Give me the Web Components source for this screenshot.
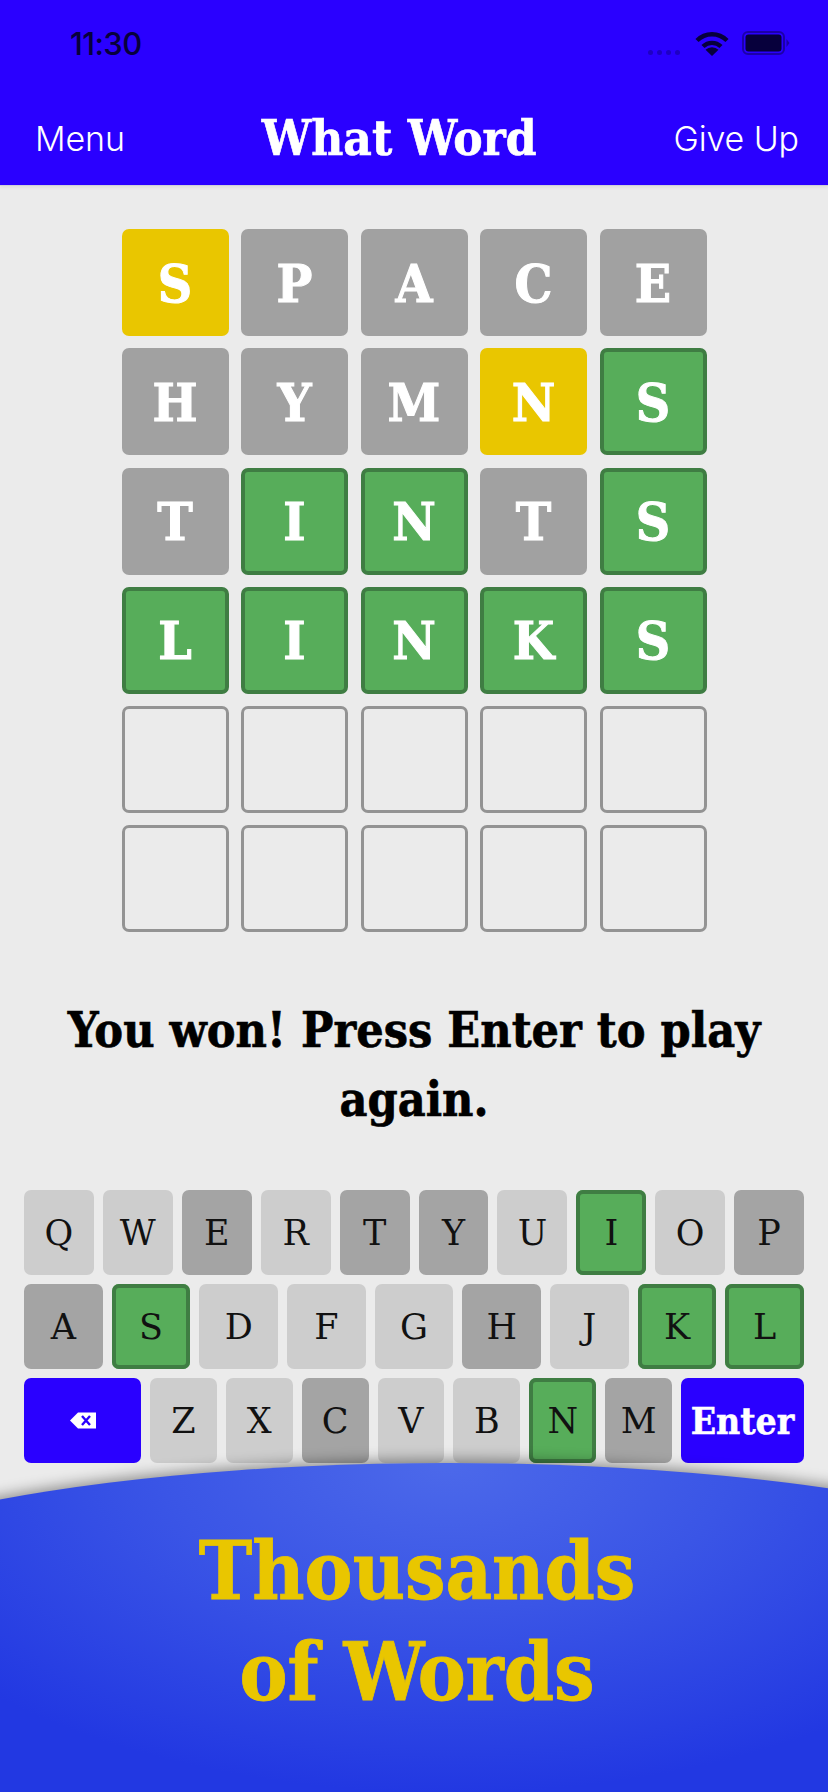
<!DOCTYPE html>
<html>
<head>
<meta charset="utf-8">
<title>What Word</title>
<style>
html, body { margin: 0; padding: 0; background: #ebebeb; }
body { width: 828px; height: 1792px; overflow: hidden; position: relative; }
</style>
</head>
<body>
<what-word-app></what-word-app>
<script>
const SLAB = '"DejaVu Serif Condensed", "DejaVu Serif", serif';
const SLAB_WIDE = '"DejaVu Serif", serif';

class StatusBar extends HTMLElement {
    constructor() {
        super();
        this.attachShadow({ mode: "open" }).innerHTML = `<style>
            :host { display: flex; align-items: center; height: 86px; box-sizing: border-box; padding: 0 38px 0 70px; font: 500 31px "Inter", "Liberation Sans", sans-serif; color: #07003c; }
            .time { flex: 1; letter-spacing: -0.6px; }
            .dots { display: flex; gap: 4px; margin: 18px 15px 0 0; }
            .dots i { width: 5px; height: 5px; border-radius: 50%; background: #1e00c4; }
            svg { display: block; }
            .battery { margin-left: 13px; }
        </style>
        <span class="time">11:30</span>
        <span class="dots"><i></i><i></i><i></i><i></i></span>
        <svg width="34" height="25" viewBox="0 0 34 25">
            <path d="M2 9.5 A21 21 0 0 1 32 9.5" fill="none" stroke="#07003c" stroke-width="4.4"/>
            <path d="M8 15.5 A13 13 0 0 1 26 15.5" fill="none" stroke="#07003c" stroke-width="4.4"/>
            <path d="M17 25 L10.5 18.8 A9.5 9.5 0 0 1 23.5 18.8 Z" fill="#07003c"/>
        </svg>
        <svg class="battery" width="48" height="24" viewBox="0 0 48 24">
            <rect x="1" y="1" width="41" height="22" rx="5" fill="none" stroke="#1c00a8" stroke-width="2"/>
            <rect x="3.5" y="3.5" width="36" height="17" rx="3" fill="#07003c"/>
            <path d="M44.5 8 L47.5 12 L44.5 16 Z" fill="#1c00a8"/>
        </svg>`;
    }
}
customElements.define("status-bar", StatusBar);

class NavBar extends HTMLElement {
    constructor() {
        super();
        this.attachShadow({ mode: "open" }).innerHTML = `<style>
            :host { display: block; background: #2a00ff; height: 185px; box-shadow: 0 1px 0 #cfcfd8, 0 3px 3px rgba(0,0,0,.05); position: relative; }
            .row { display: flex; align-items: center; justify-content: space-between; padding: 0 29px 0 35px; height: 44px; margin-top: 30px; color: #fff; font: 300 34px "Inter", "Liberation Sans", sans-serif; letter-spacing: -0.1px; }
            .title { font: 700 49px ${SLAB}; letter-spacing: 0; -webkit-text-stroke: 0.6px #fff; }
        </style>
        <status-bar></status-bar>
        <div class="row"><span>Menu</span><span class="title">What Word</span><span>Give Up</span></div>`;
    }
}
customElements.define("nav-bar", NavBar);

class WordTile extends HTMLElement {
    constructor() {
        super();
        this.attachShadow({ mode: "open" }).innerHTML = `<style>
            :host { display: flex; align-items: center; justify-content: center; box-sizing: border-box; height: 107px; border-radius: 7px; color: #fff; font: 700 53px ${SLAB}; -webkit-text-stroke: 1px #fff; }
            :host([state="absent"]) { background: #a1a1a1; }
            :host([state="present"]) { background: #e9c600; }
            :host([state="correct"]) { background: #57ad5a; border: 4px solid #3f7d43; }
            :host([state="empty"]) { border: 3.5px solid #939393; }
        </style><slot></slot>`;
    }
}
customElements.define("word-tile", WordTile);

class WordGrid extends HTMLElement {
    constructor() {
        super();
        let root = this.attachShadow({ mode: "open" });
        root.innerHTML = `<style>
            :host { display: grid; grid-template-columns: repeat(5, 107px); column-gap: 12.5px; row-gap: 12.3px; justify-content: center; padding-top: 44px; }
        </style>`;
        let rows = [
            ["SPACE", "paaaa"],
            ["HYMNS", "aaapc"],
            ["TINTS", "accac"],
            ["LINKS", "ccccc"],
            ["     ", "eeeee"],
            ["     ", "eeeee"]
        ];
        let names = { p: "present", a: "absent", c: "correct", e: "empty" };
        for (let [word, marks] of rows) {
            for (let i = 0; i < 5; i++) {
                let tile = document.createElement("word-tile");
                tile.setAttribute("state", names[marks[i]]);
                tile.textContent = word[i].trim();
                root.appendChild(tile);
            }
        }
    }
}
customElements.define("word-grid", WordGrid);

class GameMessage extends HTMLElement {
    constructor() {
        super();
        this.attachShadow({ mode: "open" }).innerHTML = `<style>
            :host { display: block; box-sizing: border-box; height: 258px; padding: 64px 40px 0; text-align: center; color: #000; font: 700 48px/69px ${SLAB}; -webkit-text-stroke: 0.6px #000; }
        </style><slot></slot>`;
    }
}
customElements.define("game-message", GameMessage);

class KeyCap extends HTMLElement {
    constructor() {
        super();
        this.attachShadow({ mode: "open" }).innerHTML = `<style>
            :host { display: flex; align-items: center; justify-content: center; box-sizing: border-box; flex: 1 1 0; min-width: 0; height: 85px; border-radius: 7px; background: #cdcdcd; color: #111; font: 400 35px ${SLAB_WIDE}; }
            :host([state="absent"]) { background: #a4a4a4; }
            :host([state="correct"]) { background: #57ad5a; box-shadow: inset 0 0 0 4px #3f7d43; }
            :host([state="action"]) { background: #2a00ff; color: #fff; font: 700 37px ${SLAB}; flex: none; -webkit-text-stroke: 0.5px #fff; }
        </style><slot></slot>`;
    }
}
customElements.define("key-cap", KeyCap);

class GameKeyboard extends HTMLElement {
    constructor() {
        super();
        let root = this.attachShadow({ mode: "open" });
        root.innerHTML = `<style>
            :host { display: flex; flex-direction: column; gap: 9px; padding: 0 24px; }
            .row { display: flex; gap: 9px; }
            svg { display: block; }
        </style>`;
        let absent = "ETYPAHCM";
        let correct = "ISKLN";
        let addKeys = (row, letters) => {
            for (let letter of letters) {
                let key = document.createElement("key-cap");
                key.textContent = letter;
                if (absent.includes(letter)) key.setAttribute("state", "absent");
                if (correct.includes(letter)) key.setAttribute("state", "correct");
                row.appendChild(key);
            }
        };
        let addRow = () => {
            let row = document.createElement("div");
            row.className = "row";
            root.appendChild(row);
            return row;
        };
        addKeys(addRow(), "QWERTYUIOP");
        addKeys(addRow(), "ASDFGHJKL");
        let last = addRow();
        let back = document.createElement("key-cap");
        back.setAttribute("state", "action");
        back.style.width = "117px";
        back.innerHTML = `<svg width="26" height="17" viewBox="0 0 26 17"><path d="M8 0.5 H26 V16.5 H8 L0 8.5 Z" fill="#fff"/><path d="M12 4 L20 13 M20 4 L12 13" stroke="#2a00ff" stroke-width="2.4"/></svg>`;
        last.appendChild(back);
        addKeys(last, "ZXCVBNM");
        let enter = document.createElement("key-cap");
        enter.setAttribute("state", "action");
        enter.style.width = "123px";
        enter.textContent = "Enter";
        last.appendChild(enter);
    }
}
customElements.define("game-keyboard", GameKeyboard);

// promo panel lies over the bottom of the app, its curved top is an oversized ellipse
class PromoPanel extends HTMLElement {
    constructor() {
        super();
        this.attachShadow({ mode: "open" }).innerHTML = `<style>
            :host { display: block; position: absolute; left: 0; right: 0; top: 1420px; bottom: 0; overflow: hidden; }
            .curve { position: absolute; left: -272px; width: 1440px; top: 43px; height: 700px; border-radius: 720px 720px 0 0 / 168px 168px 0 0;
                background: radial-gradient(ellipse 640px 330px at 720px 0, #4c69ea 0%, #3a55e6 45%, #2238e2 100%);
                background-color: #2238e2;
                box-shadow: 0 -3px 14px rgba(0,0,0,.4); }
            .text { position: absolute; left: 6px; right: 0; top: 101px; text-align: center; color: #e9c600; font: 700 80px/101px ${SLAB}; -webkit-text-stroke: 0.8px #e9c600; }
        </style>
        <div class="curve"></div>
        <div class="text"><slot></slot></div>`;
    }
}
customElements.define("promo-panel", PromoPanel);

class WhatWordApp extends HTMLElement {
    constructor() {
        super();
        this.attachShadow({ mode: "open" }).innerHTML = `<style>
            :host { display: block; height: 1792px; background: #ebebeb; font-family: ${SLAB}; }
        </style>
        <nav-bar></nav-bar>
        <word-grid></word-grid>
        <game-message>You won! Press Enter to play again.</game-message>
        <game-keyboard></game-keyboard>
        <promo-panel>Thousands<br>of Words</promo-panel>`;
    }
}
customElements.define("what-word-app", WhatWordApp);
</script>
</body>
</html>
